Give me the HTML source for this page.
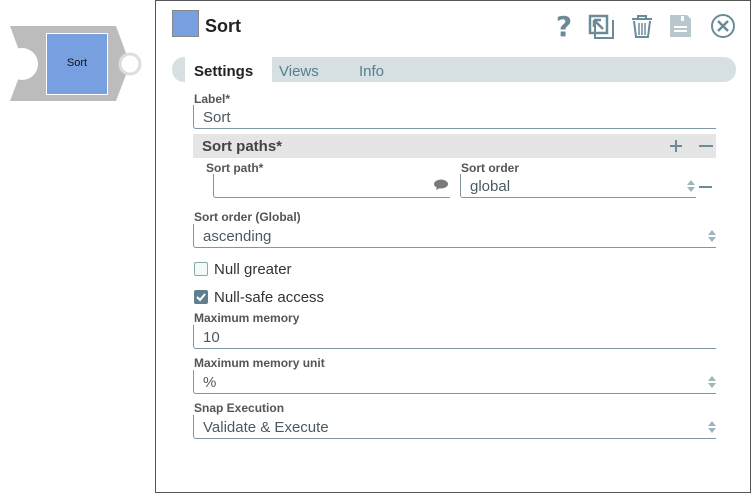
<!DOCTYPE html>
<html><head><style>
*{margin:0;padding:0;box-sizing:border-box}
body{width:751px;height:494px;background:#fff;position:relative;font-family:"Liberation Sans","DejaVu Sans",sans-serif;overflow:hidden}
.a{position:absolute}
.lbl{position:absolute;font-size:12px;font-weight:bold;color:#555}
.fld{position:absolute;border-left:1px solid #7c97a5;border-bottom:1px solid #7c97a5;border-radius:0 0 0 3px;font-size:15px;color:#4a5a63;padding-left:9px;padding-top:2px;line-height:22px}
.spin{position:absolute;width:8px;height:14px}
</style></head><body>
<svg class="a" style="left:0;top:0" width="155" height="130">
<path d="M10 26 H116 L130 64 L116 101 H10 L24 64 Z" fill="#bcbcbc"/>
<circle cx="22" cy="64" r="16" fill="#fff"/>
<circle cx="130" cy="64" r="10" fill="#fff" stroke="#ddd" stroke-width="3"/>
<rect x="46.5" y="33.5" width="61" height="61" fill="#789fe0" stroke="#fff"/>
<text x="77" y="66" font-size="11" text-anchor="middle" fill="#111" font-family="Liberation Sans">Sort</text>
</svg>
<div class="a" style="left:155px;top:0;width:596px;height:493px;border:1px solid #555"></div>
<div class="a" style="left:172px;top:10px;width:27px;height:27px;background:#789fe0;border:1px solid #888"></div>
<div class="a" style="left:205px;top:16px;font-size:18px;font-weight:bold;color:#222">Sort</div>
<svg class="a" style="left:550px;top:10px" width="190" height="32">
<text x="14" y="26" font-size="28" font-weight="bold" fill="#6b8b98" text-anchor="middle" font-family="DejaVu Sans">?</text>
<rect x="40" y="6" width="17" height="17" fill="none" stroke="#6b8b98" stroke-width="2.5"/>
<path d="M45 10v18h18v-18" fill="none" stroke="#6b8b98" stroke-width="2"/>
<path d="M44 10l9 9M44 10h7M44 10v7" stroke="#6b8b98" stroke-width="2.5" fill="none"/>
<path d="M82 9h20M88 9v-3h8v3M84 11l2 16h12l2-16" fill="none" stroke="#6b8b98" stroke-width="2"/>
<path d="M89 13v12M92 13v12M95 13v12" stroke="#6b8b98" stroke-width="1.5"/>
<path d="M120 5h17l4 4v18h-21z" fill="#b8c8ce"/>
<rect x="124" y="16" width="13" height="2" fill="#fff"/><rect x="124" y="20" width="13" height="2" fill="#fff"/>
<rect x="131" y="6" width="3" height="5" fill="#fff"/>
<circle cx="173" cy="16" r="11" fill="none" stroke="#6b8b98" stroke-width="2"/>
<path d="M168 11l10 10M178 11l-10 10" stroke="#6b8b98" stroke-width="2.5"/>
</svg>
<div class="a" style="left:172px;top:57px;width:564px;height:25px;background:#d6dfe2;border-radius:12px"></div>
<div class="a" style="left:185px;top:57px;width:87px;height:25px;background:#fff"></div>
<div class="a" style="left:194px;top:63px;font-size:15px;font-weight:bold;color:#222">Settings</div>
<div class="a" style="left:279px;top:63px;font-size:15px;color:#55808f">Views</div>
<div class="a" style="left:359px;top:63px;font-size:15px;color:#55808f">Info</div>

<div class="lbl" style="left:194px;top:92px">Label*</div>
<div class="fld" style="left:193px;top:105px;width:523px;height:24px">Sort</div>

<div class="a" style="left:193px;top:134px;width:523px;height:24px;background:#e5e5e5"></div>
<div class="a" style="left:202px;top:138px;font-size:15px;font-weight:bold;color:#444">Sort paths*</div>
<div class="a" style="left:670px;top:145px;width:12px;height:2px;background:#6b8b98"></div>
<div class="a" style="left:675px;top:140px;width:2px;height:12px;background:#6b8b98"></div>
<div class="a" style="left:699px;top:145px;width:14px;height:2px;background:#6b8b98"></div>

<div class="lbl" style="left:206px;top:161px">Sort path*</div>
<div class="fld" style="left:213px;top:174px;width:237px;height:24px"></div>
<svg class="a" style="left:433px;top:179px" width="16" height="12"><ellipse cx="8" cy="5" rx="7" ry="4.5" fill="#7a7a7a"/><path d="M4 8l-1 3l4-2z" fill="#7a7a7a"/></svg>
<div class="lbl" style="left:461px;top:161px">Sort order</div>
<div class="fld" style="left:460px;top:174px;width:236px;height:24px">global</div>
<svg class="spin" style="left:687px;top:179px"><path d="M0 6l4-5l4 5zM0 8l4 5l4-5z" fill="#a0b4bc"/></svg>
<div class="a" style="left:699px;top:186px;width:13px;height:2px;background:#6b8b98"></div>

<div class="lbl" style="left:194px;top:210px">Sort order (Global)</div>
<div class="fld" style="left:193px;top:224px;width:523px;height:24px">ascending</div>
<svg class="spin" style="left:708px;top:229px"><path d="M0 6l4-5l4 5zM0 8l4 5l4-5z" fill="#a0b4bc"/></svg>

<div class="a" style="left:194px;top:262px;width:14px;height:14px;border:1px solid #8aa;border-radius:2px;background:#f4f8f9"></div>
<div class="a" style="left:214px;top:261px;font-size:15px;color:#333">Null greater</div>
<div class="a" style="left:194px;top:290px;width:14px;height:14px;background:#5f7f8c;border-radius:2px"></div>
<svg class="a" style="left:194px;top:290px" width="14" height="14"><path d="M3 7l3 3l5-6" stroke="#fff" stroke-width="2" fill="none"/></svg>
<div class="a" style="left:214px;top:289px;font-size:15px;color:#333">Null-safe access</div>

<div class="lbl" style="left:194px;top:311px">Maximum memory</div>
<div class="fld" style="left:193px;top:325px;width:523px;height:24px">10</div>

<div class="lbl" style="left:194px;top:356px">Maximum memory unit</div>
<div class="fld" style="left:193px;top:370px;width:523px;height:24px">%</div>
<svg class="spin" style="left:708px;top:375px"><path d="M0 6l4-5l4 5zM0 8l4 5l4-5z" fill="#a0b4bc"/></svg>

<div class="lbl" style="left:194px;top:401px">Snap Execution</div>
<div class="fld" style="left:193px;top:415px;width:523px;height:24px">Validate &amp; Execute</div>
<svg class="spin" style="left:708px;top:420px"><path d="M0 6l4-5l4 5zM0 8l4 5l4-5z" fill="#a0b4bc"/></svg>
</body></html>
